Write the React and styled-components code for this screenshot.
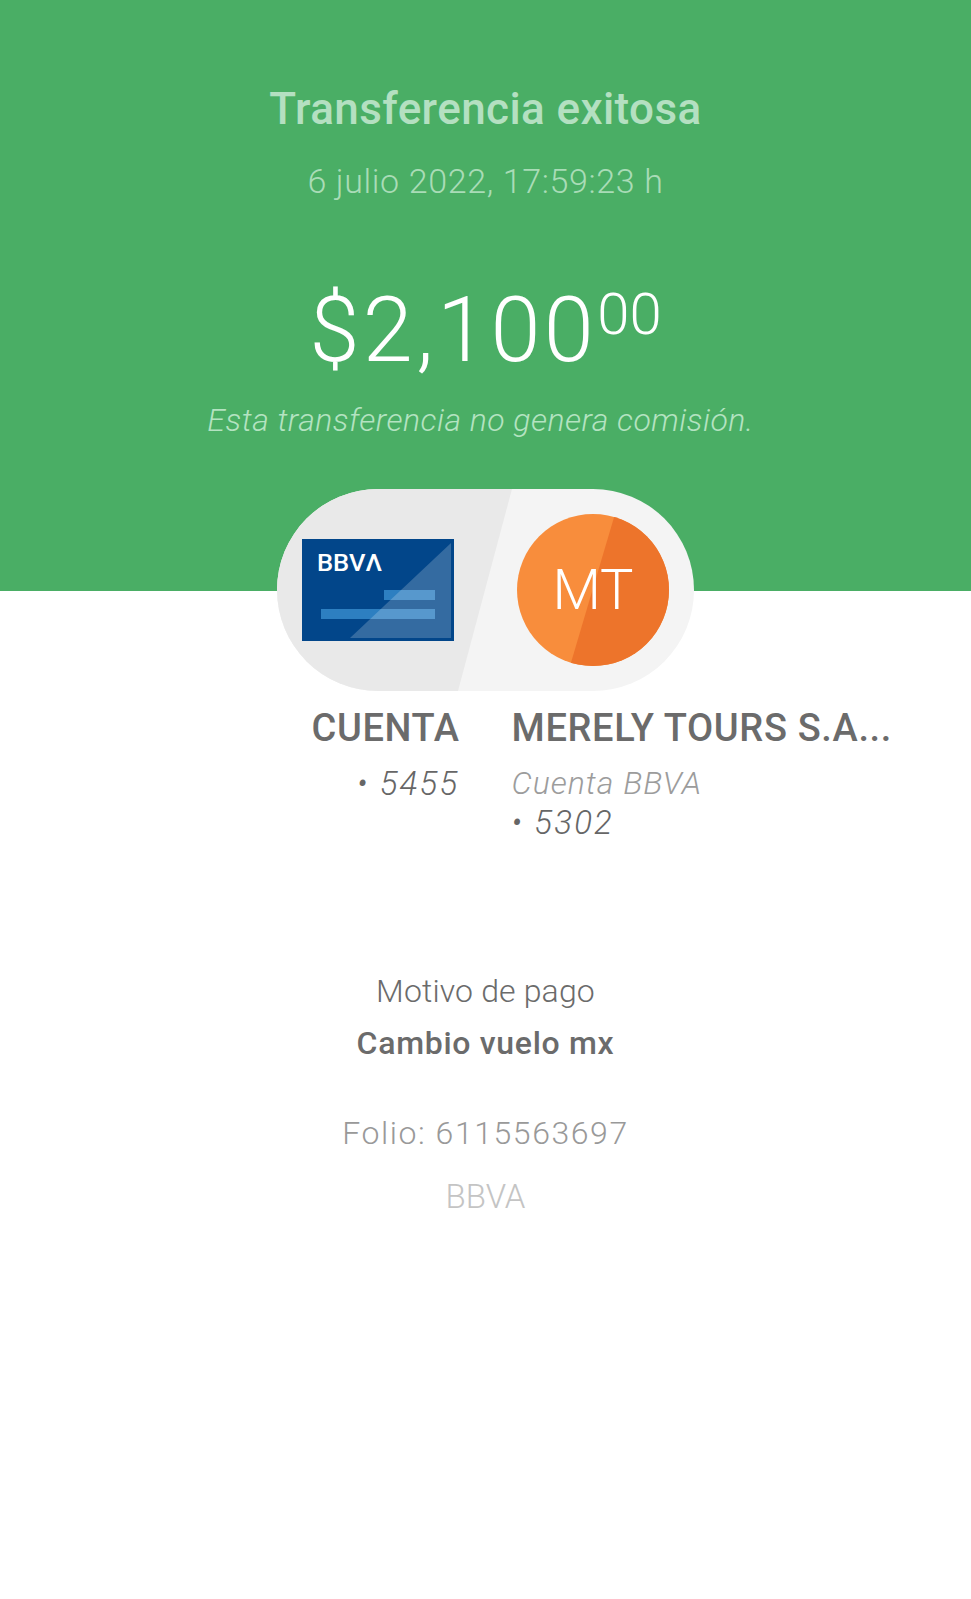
import React from "react";
import styled, { createGlobalStyle } from "styled-components";

const GlobalStyle = createGlobalStyle`
  html, body {
    margin: 0;
    padding: 0;
    background: #ffffff;
    font-family: "Roboto", "Liberation Sans", sans-serif;
  }
`;

const Page = styled.div`
  width: 971px;
  height: 1599px;
  overflow: hidden;
  background: #ffffff;
  text-align: center;
`;

const Hero = styled.header`
  height: 591px;
  box-sizing: border-box;
  padding-top: 82px;
  background: #4aae65;
`;

const Title = styled.h1`
  margin: 0;
  font-size: 44px;
  line-height: 54px;
  font-weight: 500;
  letter-spacing: 0.4px;
  color: #b4e0c1;
`;

const DateText = styled.p`
  margin: 25px 0 0;
  font-size: 34px;
  line-height: 40px;
  font-weight: 300;
  letter-spacing: 0.64px;
  color: #a9dcb7;
`;

const Amount = styled.div`
  margin-top: 80px;
  font-size: 90px;
  line-height: 100px;
  font-weight: 300;
  letter-spacing: 3.5px;
  color: #ffffff;
`;

const Cents = styled.sup`
  font-size: 58px;
  line-height: 0;
  letter-spacing: 0;
  vertical-align: 27px;
`;

const Note = styled.p`
  margin: 19px 10px 0 0;
  font-size: 32px;
  line-height: 40px;
  font-weight: 300;
  font-style: italic;
  letter-spacing: 0.46px;
  color: #b4e3c1;
`;

const Pill = styled.div`
  position: relative;
  width: 417px;
  height: 202px;
  box-sizing: border-box;
  margin: -102px auto 0;
  padding: 0 25px;
  display: flex;
  align-items: center;
  justify-content: space-between;
  border-radius: 101px;
  overflow: hidden;
  background: #f4f4f4;

  &::before {
    content: "";
    position: absolute;
    inset: 0;
    background: #e9e9e9;
    clip-path: polygon(0 0, 235px 0, 181px 100%, 0 100%);
  }
`;

const CardIcon = styled.svg`
  position: relative;
  display: block;
  width: 152px;
  height: 102px;
`;

const LogoText = styled.text`
  font-family: "Roboto", "Liberation Sans", sans-serif;
  font-size: 23px;
  font-weight: 500;
  fill: #ffffff;
`;

const Avatar = styled.div`
  position: relative;
  width: 152px;
  height: 152px;
  display: flex;
  align-items: center;
  justify-content: center;
  border-radius: 50%;
  overflow: hidden;
  background: #f88d3c;
  font-size: 56px;
  font-weight: 300;
  color: #ffffff;

  &::before {
    content: "";
    position: absolute;
    inset: 0;
    background: #ed742b;
    clip-path: polygon(98px 0, 100% 0, 100% 100%, 53px 100%);
  }
`;

const Initials = styled.span`
  position: relative;
`;

const Accounts = styled.section`
  display: grid;
  grid-template-columns: 1fr 1fr;
  column-gap: 52px;
  margin-top: 14px;
`;

const Account = styled.div`
  text-align: ${(p) => p.$align};
`;

const AccountName = styled.h2`
  margin: 0;
  font-size: 38px;
  line-height: 46px;
  font-weight: 500;
  letter-spacing: 0.65px;
  color: #6b6b6b;
`;

const BankName = styled.div`
  margin-top: 13px;
  font-size: 32px;
  line-height: 39px;
  font-weight: 300;
  font-style: italic;
  letter-spacing: 1px;
  color: #9c9c9c;
`;

const AccountNumber = styled.div`
  margin-top: ${(p) => p.$top}px;
  font-size: 33px;
  line-height: 39px;
  font-weight: 300;
  font-style: italic;
  letter-spacing: 2.2px;
  color: #666666;
`;

const Reason = styled.p`
  margin: 129px 0 0;
  font-size: 32px;
  line-height: 40px;
  font-weight: 300;
  letter-spacing: 0.15px;
  color: #6b6b6b;
`;

const ReasonValue = styled.p`
  margin: 12px 0 0;
  font-size: 32px;
  line-height: 40px;
  font-weight: 500;
  letter-spacing: 0.7px;
  color: #6b6b6b;
`;

const Folio = styled.p`
  margin: 50px 0 0;
  font-size: 32px;
  line-height: 40px;
  font-weight: 300;
  letter-spacing: 1.56px;
  color: #999999;
`;

const Bank = styled.p`
  margin: 24px 0 0;
  font-size: 33px;
  line-height: 40px;
  font-weight: 300;
  color: #c4c4c4;
`;

function BbvaCard() {
  return (
    <CardIcon viewBox="0 0 152 102" aria-hidden="true">
      <rect width="152" height="102" fill="#02468a" />
      <rect x="19" y="70" width="114" height="10" fill="#2d7fc1" />
      <rect x="82" y="51" width="51" height="10" fill="#2d7fc1" />
      <polygon points="48,99 149,4 149,99" fill="#ffffff" fillOpacity="0.2" />
      <LogoText x="15" y="32" textLength="65" lengthAdjust="spacingAndGlyphs">
        BBVΛ
      </LogoText>
    </CardIcon>
  );
}

export default function App() {
  return (
    <Page>
      <GlobalStyle />
      <Hero>
        <Title>Transferencia exitosa</Title>
        <DateText>6 julio 2022, 17:59:23 h</DateText>
        <Amount>
          $2,100<Cents>00</Cents>
        </Amount>
        <Note>Esta transferencia no genera comisión.</Note>
      </Hero>
      <Pill>
        <BbvaCard />
        <Avatar>
          <Initials>MT</Initials>
        </Avatar>
      </Pill>
      <Accounts>
        <Account $align="right">
          <AccountName>CUENTA</AccountName>
          <AccountNumber $top={13}>• 5455</AccountNumber>
        </Account>
        <Account $align="left">
          <AccountName>MERELY TOURS S.A...</AccountName>
          <BankName>Cuenta BBVA</BankName>
          <AccountNumber $top={0}>• 5302</AccountNumber>
        </Account>
      </Accounts>
      <Reason>Motivo de pago</Reason>
      <ReasonValue>Cambio vuelo mx</ReasonValue>
      <Folio>Folio: 6115563697</Folio>
      <Bank>BBVA</Bank>
    </Page>
  );
}
